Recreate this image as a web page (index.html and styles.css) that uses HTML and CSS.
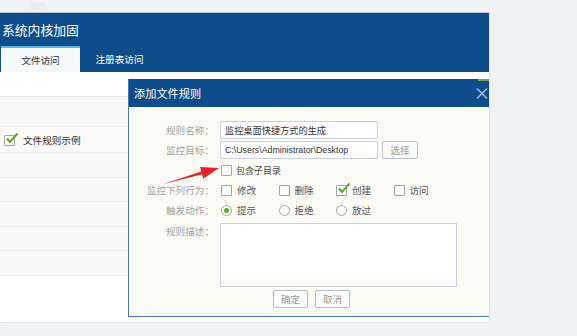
FILE: index.html
```html
<!DOCTYPE html>
<html lang="zh-CN">
<head>
  <meta charset="UTF-8">
  <title>系统内核加固</title>
  <link rel="stylesheet" href="styles.css">
</head>
<body>

  <div class="ghost">稿件</div>

  <div class="window">
    <div class="window-head">
      <h1 class="window-title">系统内核加固</h1>
      <div class="tabs">
        <span class="tab is-active">文件访问</span>
        <span class="tab">注册表访问</span>
      </div>
    </div>
    <div class="toolbar"></div>
    <ul class="rules">
      <li class="rule rule-head"></li>
      <li class="rule rule-first">
        <span class="check is-checked"><svg viewBox="0 0 12 12"><path d="M2 5.5 L5 9 L12.5 0.5"/></svg></span>
        文件规则示例
      </li>
      <li class="rule"></li>
      <li class="rule"></li>
      <li class="rule"></li>
      <li class="rule"></li>
      <li class="rule"></li>
    </ul>

    <!-- add-rule dialog sits over the list -->
    <div class="dialog">
      <span class="dialog-mark"></span>
      <div class="dialog-head">
        <span class="dialog-title">添加文件规则</span>
        <svg class="dialog-close" viewBox="0 0 13 13"><path d="M1 1 L12 12 M12 1 L1 12"/></svg>
      </div>
      <div class="dialog-body">
        <div class="field">
          <label class="field-label">规则名称：</label>
          <input class="text-input" type="text" value="监控桌面快捷方式的生成">
        </div>
        <div class="field field-target">
          <label class="field-label">监控目标：</label>
          <input class="text-input text-input-path" type="text" value="C:\Users\Administrator\Desktop">
          <button class="btn btn-pick">选择</button>
        </div>
        <div class="field field-sub">
          <span class="field-label"></span>
          <span class="option"><span class="check"></span>包含子目录</span>
        </div>
        <div class="field">
          <label class="field-label">监控下列行为：</label>
          <span class="option"><span class="check"></span>修改</span>
          <span class="option"><span class="check"></span>删除</span>
          <span class="option"><span class="check is-checked"><svg viewBox="0 0 12 12"><path d="M2 5.5 L5 9 L12.5 0.5"/></svg></span>创建</span>
          <span class="option"><span class="check"></span>访问</span>
        </div>
        <div class="field">
          <label class="field-label">触发动作：</label>
          <span class="option"><span class="radio is-checked"></span>提示</span>
          <span class="option"><span class="radio"></span>拒绝</span>
          <span class="option"><span class="radio"></span>放过</span>
        </div>
        <div class="field field-desc">
          <label class="field-label">规则描述：</label>
          <textarea class="text-area"></textarea>
        </div>
        <div class="actions">
          <button class="btn">确定</button>
          <button class="btn">取消</button>
        </div>
      </div>
    </div>
  </div>

  <!-- red annotation arrow -->
  <svg class="arrow" viewBox="0 0 577 336">
    <polygon points="162,184.5 201.3,171.5 200.1,167.1 219,168 203.3,178.7 202.1,174.3"/>
  </svg>

</body>
</html>
```

FILE: styles.css
```css
body {
  margin: 0;
  width: 577px;
  height: 336px;
  overflow: hidden;
  position: relative;
  background-color: #f1f2f4;
  font-family: "Noto Sans CJK SC", "Microsoft YaHei", sans-serif;
  font-size: 9.6px;
  color: #333;
}

.ghost {
  height: 12px;
  padding-left: 30px;
  font-size: 8px;
  line-height: 11px;
  color: #e6e7e9;
}

/* main window */
.window {
  position: relative;
  width: 489px;
  height: 309px;
  background-color: #fff;
  border-top: 1px solid #b9c4d2;
  border-right: 1px solid #dfe3e8;
  border-bottom: 1px solid #e3e6ea;
  border-radius: 0 0 3px 3px;
}

.window-head {
  height: 59px;
  background-color: #0e4c8b;
}
.window-title {
  margin: 0;
  padding-left: 2px;
  height: 33px;
  line-height: 33px;
  font-size: 12.8px;
  font-weight: normal;
  color: #fff;
}
.tabs {
  display: flex;
  padding-left: 1px;
}
.tab {
  width: 79px;
  height: 26px;
  line-height: 26px;
  text-align: center;
  color: #fff;
}
.tab.is-active {
  box-sizing: border-box;
  line-height: 24px;
  background-color: #f6f9fc;
  border-top: 2px solid #5cb1e9;
  color: #333;
}

.toolbar {
  height: 24px;
  border-bottom: 1px solid #ececec;
}

.rules {
  list-style: none;
  margin: 0;
  padding: 0;
}
.rule {
  box-sizing: border-box;
  display: flex;
  align-items: center;
  height: 24.5px;
  padding-left: 4px;
  background-color: #f9f9f9;
  border-bottom: 1px solid #eeeeee;
}
.rule-head {
  height: 30px;
}
.rule-first {
  height: 26px;
  background-color: #fafafa;
}
.rule-first .check {
  margin-right: 8px;
  margin-top: 2px;
}

/* checkboxes and radios */
.check,
.radio {
  box-sizing: border-box;
  display: inline-block;
  position: relative;
  width: 11px;
  height: 11px;
  background-color: #fff;
  border: 1px solid #9ea7b1;
  border-radius: 1px;
  flex: none;
}
.check svg {
  position: absolute;
  left: 0;
  top: -3px;
  width: 12px;
  height: 12px;
  overflow: visible;
}
.check svg path {
  fill: none;
  stroke: #4fae1e;
  stroke-width: 2;
}
.radio {
  border-radius: 50%;
}
.radio.is-checked::after {
  content: "";
  position: absolute;
  left: 2px;
  top: 2px;
  width: 5px;
  height: 5px;
  border-radius: 50%;
  background-color: #52b123;
}

/* dialog */
.dialog {
  position: absolute;
  left: 128px;
  top: 66px;
  width: 361px;
  height: 238px;
  box-sizing: border-box;
  border-left: 1px solid #4677b8;
  border-bottom: 1px solid #4677b8;
  background-color: #fcfcf7;
}
.dialog-mark {
  position: absolute;
  right: 0;
  top: 0;
  width: 11px;
  height: 2px;
  background-color: #6aa84f;
}
.dialog-head {
  display: flex;
  align-items: center;
  justify-content: space-between;
  height: 28px;
  padding: 0 1px 0 5px;
  background-color: #0e4c8b;
  color: #fff;
  font-size: 11.2px;
}
.dialog-close {
  width: 12px;
  height: 13px;
}
.dialog-close path {
  stroke: #a8c0de;
  stroke-width: 1.6;
  fill: none;
}

.dialog-body {
  padding-top: 14px;
}
.field {
  display: flex;
  align-items: center;
  height: 18px;
}
.field-label {
  width: 85px;
  margin-right: 6px;
  flex: none;
  text-align: right;
  color: #a3a3a3;
}
.field + .field {
  margin-top: 2px;
}
.field-sub {
  margin-top: 3px;
}

.text-input {
  box-sizing: border-box;
  width: 158px;
  height: 18px;
  padding: 0 4px;
  border: 1px solid #c9d0da;
  border-radius: 2px;
  background-color: #fff;
  font-family: inherit;
  font-size: 9.2px;
  color: #333;
  outline: none;
}
.text-input-path {
  font-family: "Liberation Sans", "Noto Sans CJK SC", sans-serif;
  font-size: 8.8px;
}

.btn {
  box-sizing: border-box;
  height: 18px;
  padding: 0;
  border: 1px solid #b7c0ca;
  border-radius: 2px;
  background-color: #fdfdfd;
  font-family: inherit;
  font-size: 9.6px;
  color: #999;
}
.btn-pick {
  width: 36px;
  margin-left: 4px;
}

.option {
  display: flex;
  align-items: center;
  width: 57.5px;
  padding-left: 1px;
  box-sizing: border-box;
  color: #555;
}
.option .check,
.option .radio {
  margin-right: 5px;
}
.field-sub .option {
  width: auto;
  color: #444;
  font-size: 9px;
}
.field-sub .option .check {
  margin-right: 4px;
}

.field-desc {
  align-items: flex-start;
  height: 64px;
}
.field.field-desc {
  margin-top: 4px;
}
.field-desc .field-label {
  line-height: 16px;
}
.text-area {
  box-sizing: border-box;
  width: 237px;
  height: 64px;
  border: 1px solid #c9d0da;
  background-color: #fff;
  resize: none;
  outline: none;
}

.actions {
  display: flex;
  gap: 7px;
  margin-top: 3px;
  padding-left: 144px;
}
.actions .btn {
  width: 35px;
}

/* annotation */
.arrow {
  position: absolute;
  left: 0;
  top: 0;
  width: 577px;
  height: 336px;
  pointer-events: none;
}
.arrow polygon {
  fill: #e8202a;
}
```
